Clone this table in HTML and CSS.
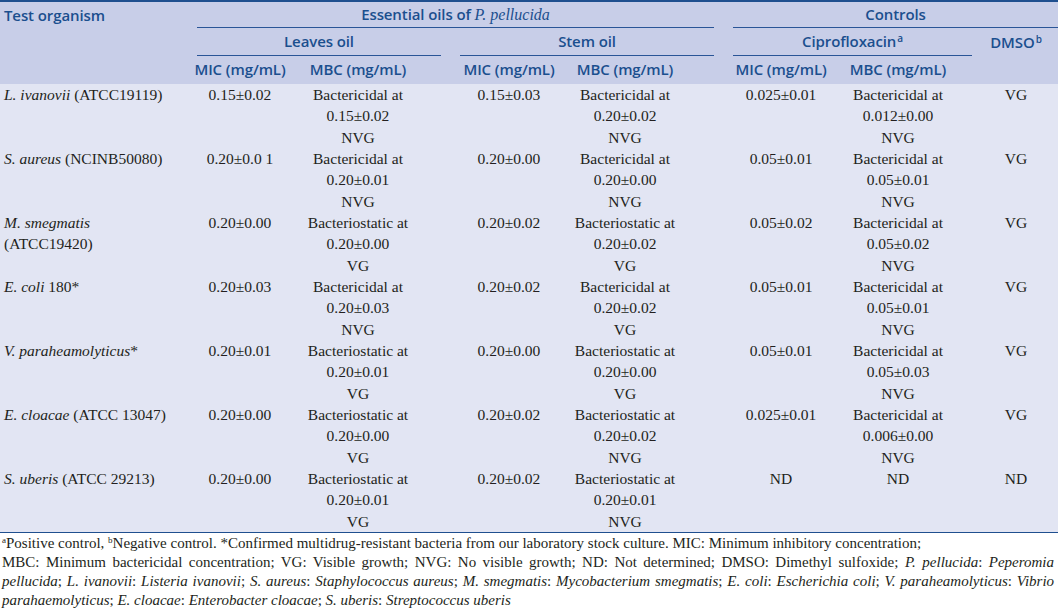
FILE: index.html
```html
<!DOCTYPE html>
<html lang="en">
<head>
<meta charset="utf-8">
<title>Table</title>
<link rel="stylesheet" href="styles.css">
</head>
<body>
<table class="tbl">
  <colgroup>
    <col class="w-org"><col class="w-mic1"><col class="w-mbc1"><col class="w-mic2"><col class="w-mbc2"><col class="w-mic3"><col class="w-mbc3"><col class="w-dmso">
  </colgroup>
  <thead>
    <tr class="hr hr1">
      <th rowspan="3" class="h-org">Test organism</th>
      <th colspan="4"><div class="grp g-ess">Essential oils of <i class="ser">P. pellucida</i></div></th>
      <th colspan="3"><div class="grp g-ctl">Controls</div></th>
    </tr>
    <tr class="hr">
      <th colspan="2"><div class="grp g-leaves">Leaves oil</div></th>
      <th colspan="2"><div class="grp g-stem">Stem oil</div></th>
      <th colspan="2"><div class="grp g-cip">Ciprofloxacin<sup>a</sup></div></th>
      <th rowspan="2" class="h-dmso">DMSO<sup>b</sup></th>
    </tr>
    <tr class="hr">
      <th class="sub">MIC (mg/mL)</th>
      <th class="sub p26">MBC (mg/mL)</th>
      <th class="sub">MIC (mg/mL)</th>
      <th class="sub p36">MBC (mg/mL)</th>
      <th class="sub">MIC (mg/mL)</th>
      <th class="sub p18">MBC (mg/mL)</th>
    </tr>
  </thead>
  <tbody>
    <tr>
      <td class="org"><i>L. ivanovii</i> (ATCC19119)</td>
      <td>0.15±0.02</td>
      <td class="p26">Bactericidal at<br>0.15±0.02<br>NVG</td>
      <td>0.15±0.03</td>
      <td class="p36">Bactericidal at<br>0.20±0.02<br>NVG</td>
      <td>0.025±0.01</td>
      <td class="p18">Bactericidal at<br>0.012±0.00<br>NVG</td>
      <td class="dm">VG</td>
    </tr>
    <tr>
      <td class="org"><i>S. aureus</i> (NCINB50080)</td>
      <td>0.20±0.0 1</td>
      <td class="p26">Bactericidal at<br>0.20±0.01<br>NVG</td>
      <td>0.20±0.00</td>
      <td class="p36">Bactericidal at<br>0.20±0.00<br>NVG</td>
      <td>0.05±0.01</td>
      <td class="p18">Bactericidal at<br>0.05±0.01<br>NVG</td>
      <td class="dm">VG</td>
    </tr>
    <tr>
      <td class="org"><i>M. smegmatis</i> (ATCC19420)</td>
      <td>0.20±0.00</td>
      <td class="p26">Bacteriostatic at<br>0.20±0.00<br>VG</td>
      <td>0.20±0.02</td>
      <td class="p36">Bacteriostatic at<br>0.20±0.02<br>VG</td>
      <td>0.05±0.02</td>
      <td class="p18">Bactericidal at<br>0.05±0.02<br>NVG</td>
      <td class="dm">VG</td>
    </tr>
    <tr>
      <td class="org"><i>E. coli</i> 180*</td>
      <td>0.20±0.03</td>
      <td class="p26">Bactericidal at<br>0.20±0.03<br>NVG</td>
      <td>0.20±0.02</td>
      <td class="p36">Bactericidal at<br>0.20±0.02<br>VG</td>
      <td>0.05±0.01</td>
      <td class="p18">Bactericidal at<br>0.05±0.01<br>NVG</td>
      <td class="dm">VG</td>
    </tr>
    <tr>
      <td class="org"><i>V. paraheamolyticus</i>*</td>
      <td>0.20±0.01</td>
      <td class="p26">Bacteriostatic at<br>0.20±0.01<br>VG</td>
      <td>0.20±0.00</td>
      <td class="p36">Bacteriostatic at<br>0.20±0.00<br>VG</td>
      <td>0.05±0.01</td>
      <td class="p18">Bactericidal at<br>0.05±0.03<br>NVG</td>
      <td class="dm">VG</td>
    </tr>
    <tr>
      <td class="org"><i>E. cloacae</i> (ATCC 13047)</td>
      <td>0.20±0.00</td>
      <td class="p26">Bacteriostatic at<br>0.20±0.00<br>VG</td>
      <td>0.20±0.02</td>
      <td class="p36">Bacteriostatic at<br>0.20±0.02<br>NVG</td>
      <td>0.025±0.01</td>
      <td class="p18">Bactericidal at<br>0.006±0.00<br>NVG</td>
      <td class="dm">VG</td>
    </tr>
    <tr>
      <td class="org"><i>S. uberis</i> (ATCC 29213)</td>
      <td>0.20±0.00</td>
      <td class="p26">Bacteriostatic at<br>0.20±0.01<br>VG</td>
      <td>0.20±0.02</td>
      <td class="p36">Bacteriostatic at<br>0.20±0.01<br>NVG</td>
      <td>ND</td>
      <td class="p18">ND</td>
      <td class="dm">ND</td>
    </tr>
  </tbody>
</table>
<div class="notes">
  <div class="note-line"><sup>a</sup>Positive control, <sup>b</sup>Negative control. *Confirmed multidrug-resistant bacteria from our laboratory stock culture. MIC: Minimum inhibitory concentration;</div>
  <div class="note-line just">MBC: Minimum bactericidal concentration; VG: Visible growth; NVG: No visible growth; ND: Not determined; DMSO: Dimethyl sulfoxide; <i>P. pellucida</i>: <i>Peperomia</i></div>
  <div class="note-line just"><i>pellucida</i>; <i>L. ivanovii</i>: <i>Listeria ivanovii</i>; <i>S. aureus</i>: <i>Staphylococcus aureus</i>; <i>M. smegmatis</i>: <i>Mycobacterium smegmatis</i>; <i>E. coli</i>: <i>Escherichia coli</i>; <i>V. paraheamolyticus</i>: <i>Vibrio</i></div>
  <div class="note-line"><i>parahaemolyticus</i>; <i>E. cloacae</i>: <i>Enterobacter cloacae</i>; <i>S. uberis</i>: <i>Streptococcus uberis</i></div>
</div>
</body>
</html>
```
FILE: styles.css
```css
html, body {
  margin: 0;
  padding: 0;
  background: #ffffff;
}
body {
  width: 1058px;
  font-family: "Liberation Serif", "Times New Roman", serif;
  color: #231f20;
}
.tbl {
  width: 1058px;
  table-layout: fixed;
  border-collapse: collapse;
  border-spacing: 0;
  border-top: 2px solid #1f4f8f;
  border-bottom: 1px solid #1f4f8f;
}
.w-org { width: 190px; }
.w-mic1 { width: 100px; }
.w-mbc1 { width: 162px; }
.w-mic2 { width: 114px; }
.w-mbc2 { width: 154px; }
.w-mic3 { width: 122px; }
.w-mbc3 { width: 130px; }
.w-dmso { width: 86px; }

thead th {
  background: #c8cee8;
  color: #1b4f8e;
  font-family: "Open Sans", "Liberation Sans", sans-serif;
  font-weight: 600;
  font-size: 15px;
  letter-spacing: -0.1px;
  padding: 0;
  height: 28px;
  line-height: 27px;
  vertical-align: top;
  text-align: center;
  white-space: nowrap;
}
.hr1 th { height: 26px; line-height: 26px; }
thead th.h-org {
  text-align: left;
  padding-left: 4px;
  line-height: 26px;
}
thead th.h-dmso {
  line-height: 28px;
  padding-left: 2px;
}
.grp {
  border-bottom: 1px solid #2a5597;
  line-height: 27px;
  height: 27px;
}
.hr1 .grp { height: 25px; line-height: 25px; }
.g-ess { margin: 0 6px 0 7px; }
.g-ctl { margin: 0 0 0 13px; }
.g-leaves { margin: 0 11px 0 7px; }
.g-stem { margin: 0 6px 0 8px; }
.g-cip { margin: 0 0 0 13px; }
.ser {
  font-family: "Liberation Serif", "Times New Roman", serif;
  font-weight: 400;
  font-size: 16px;
  letter-spacing: 0;
}
thead sup {
  font-size: 10px;
  line-height: 0;
  vertical-align: 5px;
  margin-left: 1px;
}

tbody td {
  background: #e2e5f3;
  font-size: 15.5px;
  line-height: 21.33px;
  padding: 0;
  vertical-align: top;
  text-align: center;
}
tbody td.org {
  text-align: left;
  padding-left: 4px;
  padding-right: 8px;
}
.p26 { padding-right: 26px !important; }
.p36 { padding-right: 36px !important; }
.p18 { padding-right: 18px !important; }
tbody td.dm { padding-left: 2px; }

.notes {
  padding: 1px 4px 0 2px;
  font-size: 15px;
  line-height: 19px;
}
.note-line {
  white-space: nowrap;
  height: 19px;
}
.note-line.just {
  text-align: justify;
  text-align-last: justify;
  white-space: normal;
  word-spacing: -1px;
}
.notes sup {
  font-size: 9px;
  line-height: 0;
  vertical-align: 5px;
}
```
